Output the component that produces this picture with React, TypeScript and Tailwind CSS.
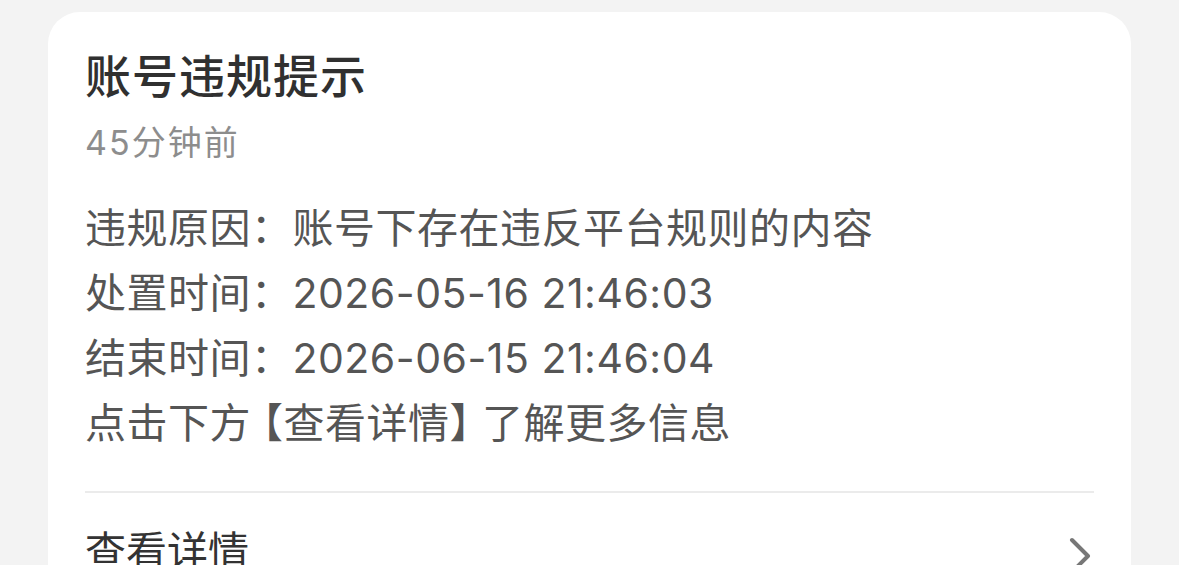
import React from 'react';

const lines = [
    ['违规原因：', '账号下存在违反平台规则的内容'],
    ['处置时间：', '2026-05-16 21:46:03'],
    ['结束时间：', '2026-06-15 21:46:04'],
];

export default function App() {
    return (
        <div
            className="w-[1179px] h-[565px] overflow-hidden bg-[#f3f3f3] pt-[12px] pl-[48px] pr-[48px]"
            style={{ fontFamily: 'Inter, "Noto Sans CJK SC", "Noto Sans", sans-serif' }}
        >
            <div className="bg-white rounded-[32px] px-[37px] pt-[34px] h-[600px]">
                <h1 className="text-[46px] leading-[60px] font-medium tracking-[1px] text-[#303030]">账号违规提示</h1>
                <div className="mt-[14px] text-[34px] leading-[46px] tracking-[2px] text-[#8d8d8d]">45分钟前</div>

                <div className="mt-[30px] text-[41px] leading-[65px] tracking-[0.5px] text-[#555555]">
                    {lines.map(([k, v]) => (
                        <div key={k} className="whitespace-nowrap">
                            {k}
                            {v}
                        </div>
                    ))}
                    <div className="whitespace-nowrap">
                        点击下方<span className="inline-block ml-[-9px]">【</span>查看详情
                        <span className="inline-block mr-[-9px]">】</span>了解更多信息
                    </div>
                </div>

                <div className="mt-[35px] h-[2px] bg-[#ebebeb]" />

                <div className="flex items-center justify-between pt-[28px]">
                    <span className="text-[41px] leading-[60px] text-[#333333]">查看详情</span>
                    <svg width="24" height="40" viewBox="0 0 24 40" className="mr-[2px] mt-[10px]">
                        <path d="M4 4 L20 20 L4 36" fill="none" stroke="#777777" strokeWidth="4" strokeLinecap="round" strokeLinejoin="round" />
                    </svg>
                </div>
            </div>
        </div>
    );
}
